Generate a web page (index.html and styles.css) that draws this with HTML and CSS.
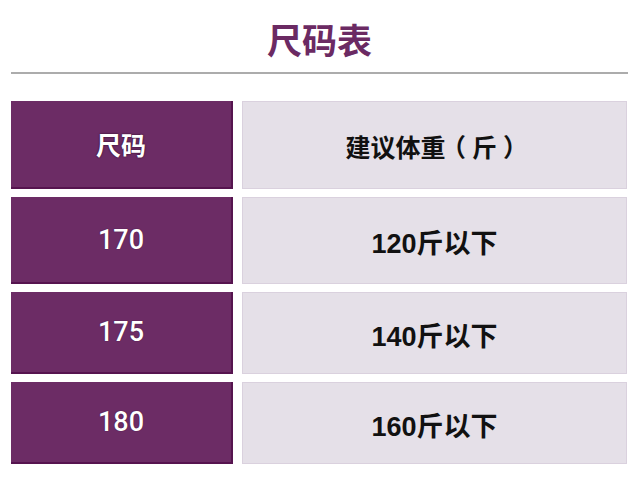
FILE: index.html
```html
<!DOCTYPE html>
<html lang="zh">
<head>
<meta charset="utf-8">
<link rel="stylesheet" href="styles.css">
</head>
<body>
<div class="page">
  <h1 class="title">尺码表</h1>
  <div class="divider"></div>
  <div class="table">
    <div class="cell size head">尺码</div>
    <div class="cell weight head">建议体重<span class="po">（</span>斤<span class="pc">）</span></div>
    <div class="cell size">170</div>
    <div class="cell weight">120斤以下</div>
    <div class="cell size">175</div>
    <div class="cell weight">140斤以下</div>
    <div class="cell size">180</div>
    <div class="cell weight">160斤以下</div>
  </div>
</div>
</body>
</html>
```
FILE: styles.css
```css
html, body {
  margin: 0;
  padding: 0;
  background: #ffffff;
}
.page {
  width: 640px;
  height: 480px;
  padding: 0 12px 0 11px;
  box-sizing: border-box;
  font-family: "Liberation Sans", "Noto Sans CJK SC", sans-serif;
}
.title {
  margin: 0;
  padding-top: 19px;
  height: 53px;
  line-height: 40px;
  text-align: center;
  font-family: "Noto Sans CJK SC", sans-serif;
  font-weight: 700;
  font-size: 35px;
  color: #6b2a63;
}
.divider {
  height: 2px;
  background: #acacac;
  margin-bottom: 27px;
}
.table {
  display: grid;
  grid-template-columns: 222px 385px;
  grid-template-rows: 88px 87px 82px 82px;
  column-gap: 9px;
  row-gap: 8px;
}
.cell {
  display: flex;
  align-items: center;
  justify-content: center;
  box-sizing: border-box;
  font-size: 27px;
}
.size {
  background: #6c2c65;
  color: #ffffff;
  border-right: 2px solid #56144f;
  border-bottom: 2px solid #56144f;
  font-family: Roboto, "Liberation Sans", sans-serif;
  font-weight: 500;
  text-shadow: 0 0 1px #2a0628;
}
.weight {
  background: #e5e0e8;
  color: #111111;
  border: 1px solid #dad1de;
  font-weight: 700;
  padding-top: 2px;
}
.head {
  font-family: "Noto Sans CJK SC", sans-serif;
  font-weight: 700;
  font-size: 25px;
}
.size.head {
  text-shadow: 0 0 2px #1f031c;
}
.po, .pc {
  font-feature-settings: "halt";
}
.po {
  margin-left: 8px;
  margin-right: 6px;
}
.pc {
  margin-left: 6px;
  margin-right: 8px;
}
```
